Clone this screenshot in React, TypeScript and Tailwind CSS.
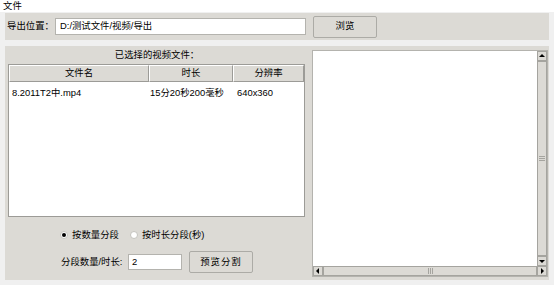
const font = "font-['Liberation_Sans','Noto_Sans_CJK_SC',sans-serif]";

const Radio = ({ checked, label }: { checked: boolean; label: string }) => (
  <label className="flex items-center gap-[4px]">
    <span className="grid size-[8px] place-items-center rounded-full border border-[#c4c3be] bg-white">
      {checked && <span className="size-[4px] rounded-full bg-black" />}
    </span>
    <span>{label}</span>
  </label>
);

const Arrow = ({ dir }: { dir: "up" | "down" | "left" | "right" }) => {
  const pts = {
    up: "1,5 4,2 7,5",
    down: "1,3 4,6 7,3",
    left: "5,1 2,4 5,7",
    right: "3,1 6,4 3,7",
  };
  return (
    <div className="grid size-[10px] shrink-0 place-items-center border border-[#a5a49f] bg-[#dcdad5]">
      <svg width="8" height="8" viewBox="0 0 8 8">
        <polygon points={pts[dir]} fill="#000" />
      </svg>
    </div>
  );
};

const App = () => {
  return (
    <main className={`h-[285px] w-[554px] overflow-hidden bg-[#f0f0f0] text-[9.4px] text-black ${font}`}>
      <div className="h-[12px] bg-white pl-[3px] leading-[12px]">文件</div>

      <section className="mx-[5px] mt-[1px] flex h-[27px] items-center bg-[#dcdad5] pl-[2px]">
        <span className="w-[48px]">导出位置：</span>
        <div className="flex h-[17px] w-[251px] items-center border border-[#b4b3ae] bg-white pl-[4px]">
          D:/测试文件/视频/导出
        </div>
        <button
          type="button"
          className="ml-[7px] h-[22px] w-[64px] rounded-[2px] border border-[#acaba6] bg-[#dcdad5]"
        >
          浏览
        </button>
      </section>

      <section className="mx-[5px] mt-[6px] flex h-[234px] bg-[#dcdad5]">
        <div className="flex w-[304px] flex-col">
          <p className="h-[18px] text-center leading-[17px]">已选择的视频文件：</p>

          <div className="ml-[3px] flex h-[153px] w-[297px] flex-col border border-[#9c9b97] bg-white">
            <div className="flex h-[17px] bg-[#dcdad5]">
              {[
                ["文件名", "w-[140px]"],
                ["时长", "w-[84px]"],
                ["分辨率", "flex-1"],
              ].map(([t, w]) => (
                <div
                  key={t}
                  className={`${w} flex items-center justify-center border-t border-l border-r border-b border-t-white border-l-white border-r-[#9c9b97] border-b-[#9c9b97]`}
                >
                  {t}
                </div>
              ))}
            </div>
            <div className="flex h-[22px] items-center">
              <span className="w-[140px] pl-[3px]">8.2011T2中.mp4</span>
              <span className="w-[84px] pl-[1px]">15分20秒200毫秒</span>
              <span className="pl-[4px]">640x360</span>
            </div>
          </div>

          <div className="ml-[55px] mt-[13px] flex h-[10px] items-center gap-[11px]">
            <Radio checked label="按数量分段" />
            <Radio checked={false} label="按时长分段(秒)" />
          </div>

          <div className="ml-[56px] mt-[11px] flex h-[22px] items-center">
            <span className="w-[67px] shrink-0 whitespace-nowrap">分段数量/时长:</span>
            <div className="flex h-[16px] w-[54px] items-center border border-[#b4b3ae] bg-white pl-[3px]">
              2
            </div>
            <button
              type="button"
              className="ml-[7px] h-[22px] w-[64px] rounded-[2px] border border-[#acaba6] bg-[#dcdad5] tracking-[1px]"
            >
              预览分割
            </button>
          </div>
        </div>

        <div className="ml-[3px] mt-[4px] flex h-[227px] w-[236px] flex-col border border-[#b4b3ae] bg-white">
          <div className="flex flex-1">
            <div className="flex-1" />
            <div className="flex w-[10px] flex-col">
              <Arrow dir="up" />
              <div className="grid flex-1 place-items-center border border-[#a5a49f] bg-[#dcdad5]">
                <div className="flex w-[6px] flex-col gap-[1px]">
                  <span className="h-px bg-[#a5a49f]" />
                  <span className="h-px bg-[#a5a49f]" />
                  <span className="h-px bg-[#a5a49f]" />
                </div>
              </div>
              <Arrow dir="down" />
            </div>
          </div>
          <div className="flex h-[10px]">
            <Arrow dir="left" />
            <div className="grid flex-1 place-items-center border border-[#a5a49f] bg-[#dcdad5]">
              <div className="flex h-[6px] gap-[1px]">
                <span className="w-px bg-[#a5a49f]" />
                <span className="w-px bg-[#a5a49f]" />
                <span className="w-px bg-[#a5a49f]" />
              </div>
            </div>
            <Arrow dir="right" />
          </div>
        </div>
      </section>
    </main>
  );
};

export default App;
